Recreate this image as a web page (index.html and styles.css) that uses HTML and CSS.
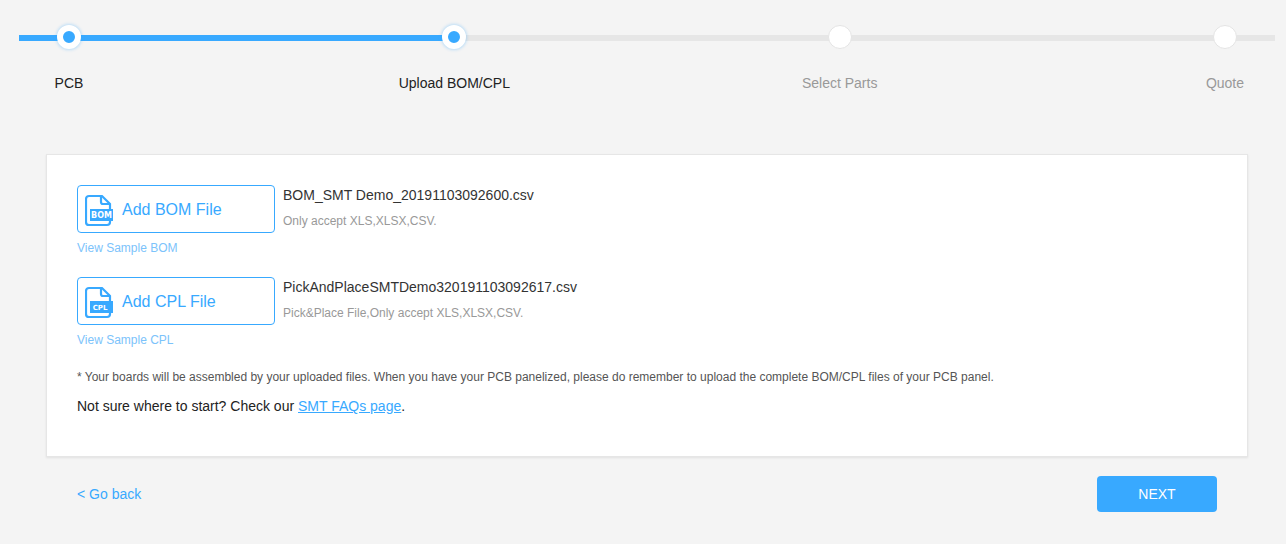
FILE: index.html
```html
<!DOCTYPE html>
<html lang="en">
<head>
<meta charset="utf-8">
<title>SMT Upload</title>
<link rel="stylesheet" href="styles.css">
</head>
<body>
<div class="steps">
  <div class="track"><div class="track-fill"></div></div>
  <div class="step done"><span class="dot"></span><span class="step-label">PCB</span></div>
  <div class="step done"><span class="dot"></span><span class="step-label">Upload BOM/CPL</span></div>
  <div class="step"><span class="dot"></span><span class="step-label">Select Parts</span></div>
  <div class="step"><span class="dot"></span><span class="step-label">Quote</span></div>
</div>
<main class="card">
  <div class="upload">
    <div class="upload-col">
      <button class="add-btn">
        <svg class="file-icon" width="28" height="36" viewBox="0 0 28 36"><path class="icon-line" d="M17 5H4a3 3 0 0 0-3 3v23a3 3 0 0 0 3 3h18a3 3 0 0 0 3-3V13z"/><path class="icon-line" d="M16 5v6a2 2 0 0 0 2 2h7"/><rect class="icon-banner" x="5" y="18" width="23" height="12"/><text x="16.500" y="27" class="icon-text">BOM</text></svg>
        <span class="add-label">Add BOM File</span>
      </button>
      <a class="sample">View Sample BOM</a>
    </div>
    <div class="file-info">
      <div class="file-name">BOM_SMT Demo_20191103092600.csv</div>
      <div class="file-hint">Only accept XLS,XLSX,CSV.</div>
    </div>
  </div>
  <div class="upload">
    <div class="upload-col">
      <button class="add-btn">
        <svg class="file-icon" width="28" height="36" viewBox="0 0 28 36"><path class="icon-line" d="M17 5H4a3 3 0 0 0-3 3v23a3 3 0 0 0 3 3h18a3 3 0 0 0 3-3V13z"/><path class="icon-line" d="M16 5v6a2 2 0 0 0 2 2h7"/><rect class="icon-banner" x="5" y="18" width="23" height="12"/><text x="15" y="27" class="icon-text icon-text-cpl">CPL</text></svg>
        <span class="add-label">Add CPL File</span>
      </button>
      <a class="sample">View Sample CPL</a>
    </div>
    <div class="file-info">
      <div class="file-name">PickAndPlaceSMTDemo320191103092617.csv</div>
      <div class="file-hint">Pick&amp;Place File,Only accept XLS,XLSX,CSV.</div>
    </div>
  </div>
  <p class="note">* Your boards will be assembled by your uploaded files. When you have your PCB panelized, please do remember to upload the complete BOM/CPL files of your PCB panel.</p>
  <p class="help">Not sure where to start? Check our <a class="faq">SMT FAQs page</a>.</p>
</main>
<div class="actions">
  <a class="back">&lt; Go back</a>
  <button class="next">NEXT</button>
</div>
</body>
</html>
```
FILE: styles.css
```css
* { box-sizing: border-box; }
html, body { margin: 0; padding: 0; }
body {
  width: 1286px;
  height: 544px;
  overflow: hidden;
  background: #f4f4f4;
  font-family: "Liberation Sans", Arial, sans-serif;
  color: #222;
}
.steps {
  position: relative;
  display: flex;
  justify-content: space-between;
  height: 154px;
  padding: 25px 1px 0 9px;
}
.track {
  position: absolute;
  left: 19px;
  top: 35px;
  width: 1256px;
  height: 6px;
  background: #e6e6e6;
}
.track-fill {
  width: 435px;
  height: 6px;
  background: #38a9ff;
}
.step {
  position: relative;
  width: 120px;
  display: flex;
  flex-direction: column;
  align-items: center;
  font-size: 14px;
  color: #999;
}
.dot {
  width: 24px;
  height: 24px;
  border-radius: 50%;
  background: #fff;
  border: 1px solid #e4e4e4;
}
.done .dot {
  border: 6px solid #fff;
  background: #38a9ff;
  box-shadow: 0 0 3px 1px rgba(56, 169, 255, .3);
}
.done { color: #222; }
.step-label {
  margin-top: 26px;
  line-height: 16px;
  white-space: nowrap;
}
.card {
  width: 1202px;
  height: 303px;
  margin-left: 46px;
  padding: 30px 30px 0;
  background: #fff;
  border: 1px solid #e6e6e6;
  box-shadow: 0 1px 2px rgba(0,0,0,.08);
}
.upload {
  display: flex;
  gap: 8px;
  height: 92px;
}
.upload-col { width: 198px; }
.add-btn {
  display: flex;
  align-items: center;
  width: 198px;
  height: 48px;
  padding: 0 0 0 7px;
  background: #fff;
  border: 1px solid #38a9ff;
  border-radius: 4px;
  color: #38a9ff;
  font: 16px "Liberation Sans", Arial, sans-serif;
  gap: 9px;
}
.add-label { padding-top: 2px; }
.file-icon { flex: none; }
.icon-line {
  fill: none;
  stroke: #38a9ff;
  stroke-width: 2.2;
}
.icon-banner { fill: #38a9ff; }
.icon-text {
  fill: #fff;
  font: bold 8px "DejaVu Sans", sans-serif;
  text-anchor: middle;
}
.icon-text-cpl { font-size: 7px; }
.sample {
  display: block;
  margin-top: 8px;
  font-size: 12px;
  line-height: 15px;
  color: #7cc3fb;
}
.file-info { padding-top: 1px; }
.file-name {
  font-size: 14px;
  line-height: 18px;
  color: #333;
}
.file-hint {
  margin-top: 9px;
  font-size: 12px;
  line-height: 16px;
  color: #999;
}
.note {
  margin: 1px 0 0;
  font-size: 12px;
  line-height: 15px;
  color: #555;
}
.help {
  margin: 12px 0 0;
  font-size: 14px;
  line-height: 18px;
  color: #222;
}
.faq { color: #38a9ff; text-decoration: underline; }
.actions {
  display: flex;
  justify-content: space-between;
  align-items: center;
  margin: 19px 69px 0 77px;
  height: 36px;
}
.back { font-size: 14px; color: #38a9ff; }
.next {
  width: 120px;
  height: 36px;
  border: 0;
  border-radius: 4px;
  background: #38a9ff;
  color: #fff;
  font: 14px "Liberation Sans", Arial, sans-serif;
}
```
